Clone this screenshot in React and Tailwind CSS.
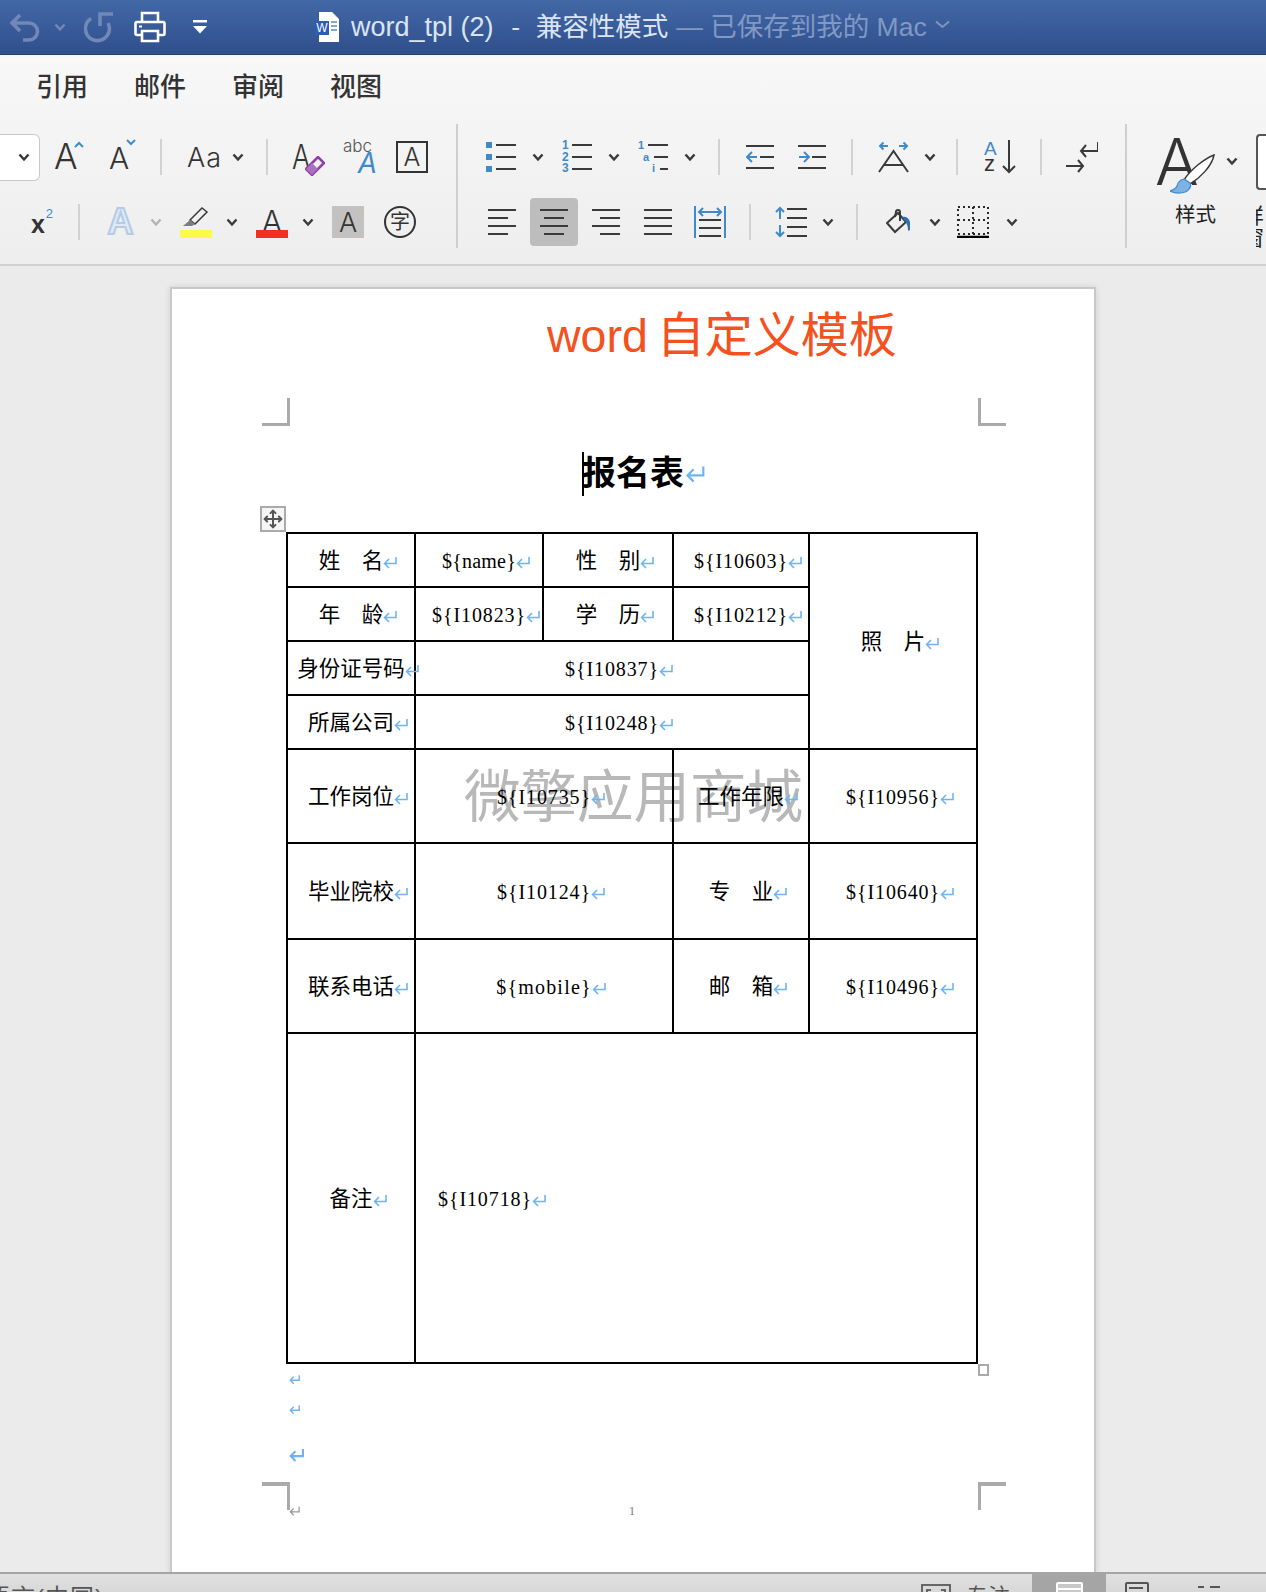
import { Move } from "lucide-react";

const UI = { fontFamily: '"Liberation Sans", "Noto Sans CJK SC", sans-serif' };
const DOC = { fontFamily: '"Liberation Serif", "Noto Sans CJK SC", serif' };

const Chevron = ({ className = "ml-[16px]", color = "#3a3a3a" }) => (
  <svg width="12" height="9" viewBox="0 0 12 9" className={`shrink-0 ${className}`}>
    <path d="M1.500 1.500 6 6.500l4.500-5" fill="none" stroke={color} strokeWidth="2.500" />
  </svg>
);

const Sep = ({ className = "" }) => <div className={`w-[2px] h-[36px] shrink-0 bg-[#d2d2d2] ${className}`} />;

// thin letter used by most ribbon buttons
const Letter = ({ children, className = "" }) => (
  <span className={`font-['Inter'] font-light leading-none text-[#333333] ${className}`}>{children}</span>
);

const Lines = ({ rows, width = 28 }) => (
  <svg width={width} height="28" viewBox={`0 0 ${width} 28`} className="shrink-0">
    {rows.map(([x1, x2], i) => (
      <rect key={i} x={x1} y={1 + i * 8} width={x2 - x1} height="2" fill="#3a3a3a" />
    ))}
  </svg>
);

const ListIcon = ({ marks, starts = [10, 10, 10], className = "" }) => (
  <div className={`relative w-[30px] h-[30px] shrink-0 ${className}`}>
    <svg width="30" height="30" viewBox="0 0 30 30">
      <rect x={starts[0]} y="2" width={30 - starts[0]} height="2" fill="#3a3a3a" />
      <rect x={starts[1]} y="14" width={30 - starts[1]} height="2" fill="#3a3a3a" />
      <rect x={starts[2]} y="26" width={30 - starts[2]} height="2" fill="#3a3a3a" />
    </svg>
    {marks}
  </div>
);

const Ret = ({ w = 14, h = 13, color = "#6fb3f7", sw = 1.6 }) => (
  <svg width={w} height={h} viewBox="0 0 14 13">
    <path d="M13 1v6.500H2M6 3 1.600 7.500 6 12" fill="none" stroke={color} strokeWidth={sw} />
  </svg>
);

// the paragraph mark hangs after the text, so centred text stays centred without it
const Cell = ({ text, latin, colSpan, rowSpan, left, track = "tracking-[0.9px]" }) => (
  <td
    colSpan={colSpan}
    rowSpan={rowSpan}
    className={`border-2 border-black p-0 pt-[2px] align-middle text-black whitespace-nowrap ${left ? "text-left pl-[22px]" : "text-center"} ${latin ? `text-[20px] ${track}` : "text-[21.500px]"}`}
  >
    {text}
    <span className="inline-block w-0 align-[-1px]">
      <Ret />
    </span>
  </td>
);

const Corner = ({ className }) => <div className={`absolute w-[28px] h-[28px] border-[#aaaaaa] ${className}`} />;

const TitleBar = () => (
  <div className="h-[55px] shrink-0 flex items-center bg-gradient-to-b from-[#4368a6] to-[#2f4f8c] border-b border-[#23406f]" style={UI}>
    <svg width="32" height="30" viewBox="0 0 32 30" className="ml-[10px] shrink-0">
      <path d="M10 3 2 11l8 8M2 11h17a8.500 8.500 0 0 1 0 17h-6" fill="none" stroke="#7188b8" strokeWidth="3.600" />
    </svg>
    <Chevron className="ml-[12px]" color="#7188b8" />
    <svg width="32" height="34" viewBox="0 0 32 34" className="ml-[18px] shrink-0">
      <path d="M7 8.500A12 12 0 1 0 24 13M29 4H16v12" fill="none" stroke="#7188b8" strokeWidth="3.600" />
    </svg>
    <svg width="32" height="32" viewBox="0 0 32 32" className="ml-[18px] shrink-0">
      <path d="M8 11V2h16v9M8 24H3a1.500 1.500 0 0 1-1.500-1.500v-10A1.500 1.500 0 0 1 3 11h26a1.500 1.500 0 0 1 1.500 1.500v10A1.500 1.500 0 0 1 29 24h-5M8 20h16v10H8z" fill="none" stroke="#ffffff" strokeWidth="2.600" />
      <path d="M5 15.500h3" stroke="#ffffff" strokeWidth="2" />
    </svg>
    <svg width="16" height="14" viewBox="0 0 16 14" className="ml-[26px] shrink-0">
      <path d="M1 0h14v2.500H1zM1 6h14l-7 7.500z" fill="#ffffff" />
    </svg>
    <div className="relative w-[26px] h-[30px] ml-[107px] shrink-0">
      <svg width="20" height="30" viewBox="0 0 20 30" className="absolute left-[4px] top-0">
        <path d="M0 0h13l7 7v23H0z" fill="#ffffff" />
        <path d="M12 10h6M12 14h6M12 18h6" stroke="#5b8bd0" strokeWidth="1.400" />
      </svg>
      <div className="absolute left-0 top-[9px] w-[14px] h-[14px] bg-[#2b5cb8] text-white text-[12px] leading-[14px] text-center">W</div>
    </div>
    <div className="ml-[10px] text-[26.500px] text-[#dce4f1] whitespace-pre leading-none">
      <span className="text-[27px] mr-[3px]">word_tpl (2)</span>  -  <span className="ml-[1px]">兼容性模式</span>
    </div>
    <div className="ml-[8px] text-[26.500px] text-[#8199c4] whitespace-pre leading-none">— 已保存到我的 Mac</div>
    <svg width="15" height="9" viewBox="0 0 15 9" className="ml-[8px] mb-[6px] shrink-0">
      <path d="M1 1.500 7.500 7 14 1.500" fill="none" stroke="#7f95bf" strokeWidth="2" />
    </svg>
  </div>
);

const FontGroup = () => (
  <div className="w-[456px] shrink-0">
    <div className="h-[66px] flex items-center">
      <div className="w-[40px] h-[47px] shrink-0 bg-white border border-l-0 border-[#c8c8c8] rounded-r-[6px] flex items-center justify-end pr-[9px]">
        <Chevron className="" />
      </div>
      <div className="relative w-[30px] ml-[14px] shrink-0">
        <Letter className="text-[35px]">A</Letter>
        <svg width="10" height="7" viewBox="0 0 10 7" className="absolute right-0 top-[2px]">
          <path d="M1 6 5 2l4 4" fill="none" stroke="#3f8acb" strokeWidth="2" />
        </svg>
      </div>
      <div className="relative w-[27px] ml-[25px] shrink-0 pt-[4px]">
        <Letter className="text-[30px]">A</Letter>
        <svg width="10" height="7" viewBox="0 0 10 7" className="absolute right-0 top-0">
          <path d="M1 1l4 4 4-4" fill="none" stroke="#3f8acb" strokeWidth="2" />
        </svg>
      </div>
      <Sep className="ml-[24px]" />
      <Letter className="w-[32px] ml-[25px] shrink-0 text-[27px] tracking-[1px]">Aa</Letter>
      <Chevron className="ml-[13px]" />
      <Sep className="ml-[22px]" />
      <div className="relative w-[32px] ml-[24px] shrink-0 h-[34px]">
        <Letter className="text-[34px] absolute left-0 top-0 origin-left scale-x-[0.8]">A</Letter>
        <svg width="20" height="20" viewBox="0 0 20 20" className="absolute left-[13px] top-[16px]">
          <path d="M1 13 13 1l6 6L7 19z" fill="#f4eef7" stroke="#8e3fa8" strokeWidth="2.500" />
          <path d="M1 13l6-6 6 6-6 6z" fill="#a870bd" />
        </svg>
      </div>
      <div className="relative w-[32px] ml-[20px] shrink-0 h-[34px]">
        <Letter className="text-[17px] absolute left-[-1px] top-[-2px] text-[#555555]">abc</Letter>
        <span className="absolute right-[-1px] bottom-[-3px] font-['Inter'] font-normal italic text-[28px] leading-none text-[#3f8acb]">A</span>
      </div>
      <div className="w-[32px] h-[32px] ml-[20px] shrink-0 border-[2.500px] border-[#333333] flex items-center justify-center">
        <Letter className="text-[25px]">A</Letter>
      </div>
    </div>
    <div className="h-[64px] flex items-center">
      <div className="relative w-[22px] ml-[31px] shrink-0 h-[30px]">
        <span className="absolute left-0 bottom-0 text-[25px] font-bold leading-none text-[#333333]">x</span>
        <span className="absolute right-0 top-0 text-[13px] leading-none text-[#3f8acb]">2</span>
      </div>
      <Sep className="ml-[25px]" />
      <span className="w-[31px] ml-[25px] shrink-0 text-center font-bold text-[36px] leading-none text-[#dfe9f5] [-webkit-text-stroke:2px_#b3cbe6]">A</span>
      <Chevron className="ml-[14px]" color="#b4b4b4" />
      <div className="w-[32px] ml-[18px] shrink-0 flex flex-col items-center">
        <svg width="32" height="24" viewBox="0 0 32 24">
          <path d="M10 14 22 2l5 4-12 12z" fill="none" stroke="#3a3a3a" strokeWidth="1.500" />
          <path d="M10 14l5 4-3 2H3z" fill="#7d7d7d" />
        </svg>
        <div className="w-[32px] h-[8px] bg-[#fdf94a]" />
      </div>
      <Chevron className="ml-[14px]" />
      <div className="w-[32px] ml-[18px] shrink-0 flex flex-col items-center">
        <Letter className="text-[31px] h-[24px]">A</Letter>
        <div className="w-[32px] h-[8px] bg-[#ee3124]" />
      </div>
      <Chevron className="ml-[14px]" />
      <div className="w-[32px] h-[32px] ml-[18px] shrink-0 bg-[#c4c2c0] flex items-center justify-center">
        <Letter className="text-[27px]">A</Letter>
      </div>
      <div className="w-[32px] h-[32px] ml-[20px] shrink-0 rounded-full border-2 border-[#333333] flex items-center justify-center text-[20px] leading-none text-[#333333]" style={UI}>字</div>
    </div>
  </div>
);

const ParagraphGroup = () => (
  <div className="w-[667px] shrink-0">
    <div className="h-[66px] flex items-center">
      <ListIcon
        className="ml-[28px]"
        marks={
          <div className="absolute left-0 top-0 h-[30px] flex flex-col justify-between">
            <div className="w-[6px] h-[6px] bg-[#3f8acb]" />
            <div className="w-[6px] h-[6px] bg-[#3f8acb]" />
            <div className="w-[6px] h-[6px] bg-[#3f8acb]" />
          </div>
        }
      />
      <Chevron className="ml-[16px]" />
      <ListIcon
        className="ml-[18px]"
        marks={
          <div className="absolute left-0 top-[-2px] h-[34px] flex flex-col justify-between text-[12px] font-bold leading-[11px] text-[#3f8acb]">
            <span>1</span>
            <span>2</span>
            <span>3</span>
          </div>
        }
      />
      <Chevron className="ml-[16px]" />
      <ListIcon
        className="ml-[18px]"
        starts={[10, 16, 22]}
        marks={
          <div className="absolute left-0 top-[-2px] h-[34px] w-[20px] flex flex-col justify-between text-[11px] font-bold leading-[11px] text-[#3f8acb]">
            <span>1</span>
            <span className="pl-[5px]">a</span>
            <span className="pl-[14px]">i</span>
          </div>
        }
      />
      <Chevron className="ml-[16px]" />
      <Sep className="ml-[22px]" />
      <svg width="28" height="28" viewBox="0 0 28 28" className="ml-[26px] shrink-0">
        <path d="M0 3h28M14 14h14M0 25h28" stroke="#3a3a3a" strokeWidth="2" />
        <path d="M11 14H1M6 9l-5 5 5 5" fill="none" stroke="#3f8acb" strokeWidth="2" />
      </svg>
      <svg width="28" height="28" viewBox="0 0 28 28" className="ml-[24px] shrink-0">
        <path d="M0 3h28M14 14h14M0 25h28" stroke="#3a3a3a" strokeWidth="2" />
        <path d="M1 14h10M6 9l5 5-5 5" fill="none" stroke="#3f8acb" strokeWidth="2" />
      </svg>
      <Sep className="ml-[25px]" />
      <svg width="31" height="32" viewBox="0 0 31 32" className="ml-[25px] shrink-0">
        <path d="M1 31 15.500 10 30 31M6 24h19" fill="none" stroke="#3a3a3a" strokeWidth="2" />
        <path d="M10 5H2M5.500 1.500 2 5l3.500 3.500M21 5h8M25.500 1.500 29 5l-3.500 3.500" fill="none" stroke="#3f8acb" strokeWidth="2" />
      </svg>
      <Chevron className="ml-[15px]" />
      <Sep className="ml-[20px]" />
      <div className="relative w-[33px] h-[34px] ml-[26px] shrink-0">
        <span className="absolute left-0 top-[-1px] text-[19px] font-medium leading-none text-[#3f8acb]">A</span>
        <span className="absolute left-0 bottom-[-1px] text-[22px] leading-none text-[#333333]">z</span>
        <svg width="14" height="34" viewBox="0 0 14 34" className="absolute right-[1px] top-0">
          <path d="M7 0v32M1 26l6 6 6-6" fill="none" stroke="#3a3a3a" strokeWidth="2" />
        </svg>
      </div>
      <Sep className="ml-[23px]" />
      <svg width="32" height="32" viewBox="0 0 32 32" className="ml-[24px] shrink-0">
        <path d="M32 1v9H15M20 4l-5 6 5 6M0 25h17M12 19l5 6-5 6" fill="none" stroke="#3a3a3a" strokeWidth="2" />
      </svg>
    </div>
    <div className="h-[64px] flex items-center">
      <div className="ml-[30px]">
        <Lines rows={[[0, 28], [0, 20], [0, 28], [0, 20]]} />
      </div>
      <div className="w-[48px] h-[48px] ml-[14px] shrink-0 rounded-[4px] bg-[#bdbdbd] flex items-center justify-center">
        <Lines rows={[[0, 28], [4, 24], [0, 28], [4, 24]]} />
      </div>
      <div className="ml-[14px]">
        <Lines rows={[[0, 28], [8, 28], [0, 28], [8, 28]]} />
      </div>
      <div className="ml-[24px]">
        <Lines rows={[[0, 28], [0, 28], [0, 28], [0, 28]]} />
      </div>
      <svg width="32" height="32" viewBox="0 0 32 32" className="ml-[22px] shrink-0">
        <path d="M1 0v32M31 0v32" stroke="#3f8acb" strokeWidth="2" />
        <path d="M5 6h22M9 2 5 6l4 4M23 2l4 4-4 4" fill="none" stroke="#3f8acb" strokeWidth="2" />
        <path d="M5 14h22M5 22h22M5 30h22" stroke="#3a3a3a" strokeWidth="2" />
      </svg>
      <Sep className="ml-[23px]" />
      <svg width="32" height="32" viewBox="0 0 32 32" className="ml-[24px] shrink-0">
        <path d="M12 3h20M12 12h20M12 21h20M12 30h20" stroke="#3a3a3a" strokeWidth="2" />
        <path d="M5 2v11M1 6l4-4 4 4M5 19v11M1 26l4 4 4-4" fill="none" stroke="#3f8acb" strokeWidth="2" />
      </svg>
      <Chevron className="ml-[15px]" />
      <Sep className="ml-[22px]" />
      <svg width="24" height="26" viewBox="0 0 24 26" className="ml-[28px] shrink-0">
        <path d="M1 14 12 4l8 9-11 10z" fill="none" stroke="#3a3a3a" strokeWidth="2" />
        <path d="M9 8l1-5a2 2 0 0 1 4 0v9" fill="none" stroke="#3a3a3a" strokeWidth="2" />
        <path d="M16 8c4-1 7 1 8 5v8c-1 1-2 1-2 0 0-5-2-8-6-13z" fill="#2f6fb5" />
      </svg>
      <Chevron className="ml-[19px]" />
      <svg width="32" height="32" viewBox="0 0 32 32" className="ml-[16px] shrink-0">
        <path d="M1 1h30v27H1zM16 1v27M1 14h30" fill="none" stroke="#2a2a2a" strokeWidth="2" strokeDasharray="2 3" />
        <path d="M0 31h32" stroke="#000000" strokeWidth="2.500" />
      </svg>
      <Chevron className="ml-[17px]" />
    </div>
  </div>
);

const StylesGroup = () => (
  <div className="flex-1 flex min-w-0" style={UI}>
    <div className="relative w-[118px] shrink-0 h-[124px]">
      <span className="absolute left-[28px] top-[5px] font-['Inter'] font-light text-[65px] leading-none text-[#333333]">A</span>
      <svg width="45" height="40" viewBox="0 0 45 40" className="absolute left-[43px] top-[30px]">
        <path d="M44 1C34 5 20 16 14 26l6 4C30 24 42 12 44 1z" fill="#ffffff" stroke="#3a3a3a" strokeWidth="1.500" />
        <path d="M14 25c-5 1-6 4-7 7-1 3-4 4-7 5 6 3 16 3 19-2 2-2 2-4 1-6z" fill="#7fb2e4" stroke="#3f8acb" strokeWidth="1.200" />
      </svg>
      <Chevron className="absolute left-[99px] top-[33px]" />
      <span className="absolute left-[48px] top-[81px] text-[20.500px] leading-none text-[#222222]">样式</span>
    </div>
    <div className="ml-[11px] flex flex-col">
      <div className="w-[20px] h-[56px] mt-[10px] bg-white border-2 border-r-0 border-[#555555] rounded-l-[4px]" />
      <div className="mt-[15px] w-[8px] overflow-hidden text-[21px] leading-[22px] text-[#222222]">
        <div className="w-[21px] -ml-[13px]">样</div>
        <div className="w-[21px] -ml-[13px]">窗</div>
      </div>
    </div>
  </div>
);

const Ribbon = () => (
  <div className="h-[211px] shrink-0 bg-gradient-to-b from-[#f8f8f8] to-[#eeeeee] border-b-[2px] border-[#d0d0d0]" style={UI}>
    <div className="h-[69px] flex items-center gap-[46px] pl-[36px] pb-[5px] text-[26px] font-medium text-[#333333]">
      <span>引用</span>
      <span>邮件</span>
      <span>审阅</span>
      <span>视图</span>
    </div>
    <div className="flex">
      <FontGroup />
      <div className="w-[2px] h-[124px] shrink-0 bg-[#cfcfcf]" />
      <ParagraphGroup />
      <div className="w-[2px] h-[124px] shrink-0 bg-[#cfcfcf]" />
      <StylesGroup />
    </div>
  </div>
);

const DocTable = () => (
  <div className="relative ml-[114px] w-[692px]">
    <div className="absolute left-[178px] top-[238px] text-[56.500px] leading-none text-[#9a9a9a]/70 whitespace-nowrap" style={UI}>
      微擎应用商城
    </div>
    <table className="relative table-fixed border-collapse w-[692px]" style={DOC}>
      <colgroup>
        <col className="w-[128px]" />
        <col className="w-[128px]" />
        <col className="w-[130px]" />
        <col className="w-[136px]" />
        <col className="w-[168px]" />
      </colgroup>
      <tbody>
        <tr className="h-[54px]">
          <Cell text="姓　名" />
          <Cell text="${name}" latin track="tracking-[0.2px]" />
          <Cell text="性　别" />
          <Cell text="${I10603}" latin />
          <Cell text="照　片" rowSpan={4} />
        </tr>
        <tr className="h-[54px]">
          <Cell text="年　龄" />
          <Cell text="${I10823}" latin />
          <Cell text="学　历" />
          <Cell text="${I10212}" latin />
        </tr>
        <tr className="h-[54px]">
          <Cell text="身份证号码" />
          <Cell text="${I10837}" latin colSpan={3} />
        </tr>
        <tr className="h-[54px]">
          <Cell text="所属公司" />
          <Cell text="${I10248}" latin colSpan={3} />
        </tr>
        <tr className="h-[94px]">
          <Cell text="工作岗位" />
          <Cell text="${I10735}" latin colSpan={2} />
          <Cell text="工作年限" />
          <Cell text="${I10956}" latin />
        </tr>
        <tr className="h-[96px]">
          <Cell text="毕业院校" />
          <Cell text="${I10124}" latin colSpan={2} />
          <Cell text="专　业" />
          <Cell text="${I10640}" latin />
        </tr>
        <tr className="h-[94px]">
          <Cell text="联系电话" />
          <Cell text="${mobile}" latin colSpan={2} track="tracking-[1.2px]" />
          <Cell text="邮　箱" />
          <Cell text="${I10496}" latin />
        </tr>
        <tr className="h-[330px]">
          <Cell text="备注" />
          <Cell text="${I10718}" latin colSpan={4} left />
        </tr>
      </tbody>
    </table>
    <div className="absolute left-[692px] top-[832px] w-[11px] h-[12px] bg-white border-2 border-[#aaaaaa]" />
  </div>
);

const Page = () => (
  <div className="relative ml-[170px] mt-[21px] w-[926px] h-[1400px] bg-white border-2 border-[#c8c8c8] shadow-[0_0_6px_rgba(0,0,0,0.12)]">
    <Corner className="left-[90px] top-[109px] border-r-[3px] border-b-[3px]" />
    <Corner className="left-[806px] top-[109px] border-l-[3px] border-b-[3px]" />
    <Corner className="left-[90px] top-[1193px] border-r-[3px] border-t-[4px]" />
    <Corner className="left-[806px] top-[1193px] border-l-[3px] border-t-[4px]" />

    <div className="ml-[375px] mt-[17px] h-[60px] flex items-center leading-none text-[#f4511e] whitespace-pre" style={UI}>
      <span className="text-[46.500px]">word</span>
      <span className="ml-[9px] text-[48px]">自定义模板</span>
    </div>

    <div className="mt-[85px] h-[44px] flex items-center justify-center" style={UI}>
      <div className="relative text-[34px] font-bold leading-none text-black">
        <span className="absolute left-0 top-[-4px] w-[2px] h-[44px] bg-black" />
        报名表
        <span className="absolute left-full top-[9px] ml-[1px]">
          <Ret w={20} h={18} />
        </span>
      </div>
    </div>

    <div className="ml-[88px] mt-[11px] w-[26px] h-[26px] bg-[#f5f5f5] border-2 border-[#aaaaaa] flex items-center justify-center">
      <Move size={20} strokeWidth={2.4} color="#555555" />
    </div>

    <DocTable />

    <div className="ml-[117px] mt-[10px]">
      <Ret w={11} h={11} sw={1.8} />
    </div>
    <div className="ml-[117px] mt-[19px]">
      <Ret w={11} h={11} sw={1.8} />
    </div>
    <div className="ml-[117px] mt-[33px]">
      <Ret w={15} h={14} sw={2} />
    </div>
    <div className="ml-[117px] mt-[44px] flex items-center h-[10px]">
      <Ret w={11} h={10} color="#999999" sw={1.6} />
      <span className="ml-[329px] text-[12px] leading-none text-[#777777]" style={DOC}>1</span>
    </div>
  </div>
);

const StatusBar = () => (
  <div className="h-[20px] shrink-0 overflow-hidden flex items-start bg-gradient-to-b from-[#e0e0e0] to-[#d8d8d8] border-t-2 border-[#a5a5a5]" style={UI}>
    <span className="-ml-[14px] mt-[12px] text-[24px] tracking-[1px] leading-none text-[#555555] whitespace-pre">语言(中国)</span>
    <div className="ml-auto mt-[10px] flex items-start">
      <svg width="30" height="20" viewBox="0 0 30 20" className="shrink-0">
        <path d="M1 20V1h28v19M6 9V6h4M24 9V6h-4" fill="none" stroke="#666666" strokeWidth="2" />
      </svg>
      <span className="ml-[15px] mt-[2px] text-[22px] leading-none text-[#555555]">专注</span>
    </div>
    <div className="ml-[22px] w-[74px] h-[20px] -mt-[2px] bg-[#a5a5a5] flex justify-center pt-[10px]">
      <div className="w-[27px] h-[20px] border-2 border-white rounded-t-[2px] pt-[4px] bg-[#c8c8c8]">
        <div className="h-[2px] bg-white" />
      </div>
    </div>
    <div className="ml-[19px] mt-[8px] w-[24px] h-[20px] border-2 border-[#555555] rounded-t-[2px] pt-[3px] pl-[2px]">
      <div className="w-[14px] h-[2px] bg-[#555555]" />
    </div>
    <div className="ml-[49px] mr-[46px] mt-[12px] flex gap-[6px]">
      <div className="w-[6px] h-[2px] bg-[#555555]" />
      <div className="w-[10px] h-[2px] bg-[#555555]" />
    </div>
  </div>
);

export default function App() {
  return (
    <div className="w-[1266px] h-[1592px] overflow-hidden flex flex-col bg-[#ebebeb]">
      <TitleBar />
      <Ribbon />
      <div className="h-[1306px] shrink-0 overflow-hidden">
        <Page />
      </div>
      <StatusBar />
    </div>
  );
}
